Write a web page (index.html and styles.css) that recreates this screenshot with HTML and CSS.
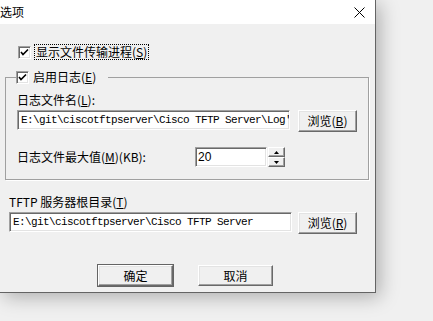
FILE: index.html
```html
<!DOCTYPE html>
<html lang="zh-CN">
<head>
  <meta charset="UTF-8">
  <title>选项</title>
  <link rel="stylesheet" href="styles.css">
</head>
<body>
  <div class="dialog">
    <!-- Title bar -->
    <div class="titlebar">
      <span class="title">选项</span>
      <svg class="close" width="11" height="11" viewBox="0 0 11 11">
        <path d="M0.5 0.5 L10.5 10.5 M10.5 0.5 L0.5 10.5" stroke="#000" stroke-width="1"/>
      </svg>
    </div>

    <div class="content">
      <div class="check show-progress">
        <span class="box"><svg width="9" height="9" viewBox="0 0 9 9"><path d="M1 4 L3 6.5 L8 1.5" fill="none" stroke="#000" stroke-width="1.6"/></svg></span>
        <span class="focus">显示文件传输进程(<u>S</u>)</span>
      </div>

      <!-- Log group -->
      <fieldset class="group">
        <legend class="check">
          <span class="box"><svg width="9" height="9" viewBox="0 0 9 9"><path d="M1 4 L3 6.5 L8 1.5" fill="none" stroke="#000" stroke-width="1.6"/></svg></span>
          <span>启用日志(<u>E</u>)</span>
        </legend>
        <div class="label">日志文件名(<u>L</u>):</div>
        <div class="row">
          <div class="field log-path">E:\git\ciscotftpserver\Cisco TFTP Server\Log'</div>
          <div class="btn browse">浏览(<u>B</u>)</div>
        </div>
        <div class="row size-row">
          <span class="label size-label">日志文件最大值(<u>M</u>)(KB):</span>
          <div class="field size">20</div>
          <div class="spin">
            <span class="spin-btn"><svg width="5" height="3" viewBox="0 0 5 3"><path d="M2.5 0 L5 3 L0 3 Z" fill="#000"/></svg></span>
            <span class="spin-btn"><svg width="5" height="3" viewBox="0 0 5 3"><path d="M0 0 L5 0 L2.5 3 Z" fill="#000"/></svg></span>
          </div>
        </div>
      </fieldset>

      <div class="label root-label">TFTP 服务器根目录(<u>T</u>)</div>
      <div class="row">
        <div class="field root-path">E:\git\ciscotftpserver\Cisco TFTP Server</div>
        <div class="btn browse">浏览(<u>R</u>)</div>
      </div>

      <div class="actions">
        <div class="btn action default">确定</div>
        <div class="btn action">取消</div>
      </div>
    </div>
  </div>
</body>
</html>
```

FILE: styles.css
```css
/* General */
body {
  margin: 0;
  height: 100vh;
  overflow: hidden;
  background-color: #f0f0f0;
  font-family: "Noto Sans CJK SC", sans-serif;
  font-size: 12px;
  line-height: 14px;
  color: #000;
}

u {
  text-decoration-thickness: 1px;
  text-underline-offset: 1px;
}

/* Dialog frame */
.dialog {
  width: 375px;
  height: 292px;
  background-color: #f0f0f0;
  border-right: 1px solid #646464;
  border-bottom: 1px solid #646464;
  box-shadow: 4px 4px 18px rgba(0, 0, 0, 0.28);
  display: flex;
  flex-direction: column;
}

.titlebar {
  height: 24px;
  background-color: #fff;
  display: flex;
  align-items: center;
}

.title {
  margin-left: 0;
  font-size: 12px;
}

.close {
  margin-left: auto;
  margin-right: 10px;
}

.content {
  padding: 21px 0 0 9px;
  display: flex;
  flex-direction: column;
}

/* Checkboxes */
.check {
  display: flex;
  align-items: center;
  gap: 4px;
}

.show-progress {
  margin-left: 9px;
}

.box {
  width: 9px;
  height: 9px;
  background-color: #fff;
  border: 1px solid;
  border-color: #a0a0a0 #fff #fff #a0a0a0;
  box-shadow: inset 1px 1px #696969, inset -1px -1px #e3e3e3;
  padding: 1px;
  display: flex;
}

.focus {
  outline: 1px dotted #000;
  outline-offset: 0;
  padding: 0 1px;
}

/* Group box */
.group {
  margin: 11px 0 0 -4px;
  width: 336px;
  padding: 0 11px 12px 11px;
  border: 1px solid #a0a0a0;
  box-shadow: 1px 1px 0 #fff;
}

.group legend {
  padding: 0 12px 0 0;
  margin-left: -1px;
}

.label {
  height: 14px;
}

.group > .label {
  margin-top: 9px;
}

.row {
  display: flex;
  align-items: flex-start;
  margin-top: 3px;
}

/* Sunken edit fields */
.field {
  height: 17px;
  padding: 1px 2px 0 3px;
  background-color: #fff;
  border: 1px solid;
  border-color: #a0a0a0 #fff #fff #a0a0a0;
  box-shadow: inset 1px 1px #696969, inset -1px -1px #e3e3e3;
  font-family: "Liberation Mono", monospace;
  font-size: 11px;
  letter-spacing: -0.6px;
  line-height: 17px;
  white-space: nowrap;
  overflow: hidden;
}

.log-path {
  width: 266px;
  margin-right: 8px;
}

.root-path {
  width: 276px;
  margin-right: 6px;
}

.size-row {
  margin-top: 15px;
  align-items: center;
}

.size-label {
  width: 178px;
  height: auto;
}

.size {
  width: 66px;
  font-family: "Liberation Sans", sans-serif;
  font-size: 12px;
  letter-spacing: 0;
  padding-left: 2px;
}

.spin {
  display: flex;
  flex-direction: column;
  margin-left: 1px;
}

.spin-btn {
  width: 15px;
  height: 8px;
  border: 1px solid;
  border-color: #fff #696969 #696969 #fff;
  box-shadow: inset -1px -1px #a0a0a0;
  background-color: #f0f0f0;
  display: flex;
  align-items: center;
  justify-content: center;
}

/* Raised buttons */
.btn {
  height: 20px;
  background-color: #f0f0f0;
  border: 1px solid;
  border-color: #fff #696969 #696969 #fff;
  box-shadow: inset -1px -1px #a0a0a0, inset 1px 1px #e3e3e3;
  display: flex;
  align-items: center;
  justify-content: center;
}

.browse {
  width: 57px;
}

.root-label {
  margin-top: 15px;
}

.actions {
  display: flex;
  gap: 25px;
  margin: 31px 0 0 89px;
}

.action {
  width: 73px;
  height: 19px;
}

.default {
  outline: 1px solid #646464;
  box-shadow: inset -1px -1px #a0a0a0, inset 1px 1px #e3e3e3, 1px 1px 0 #646464;
}
```
